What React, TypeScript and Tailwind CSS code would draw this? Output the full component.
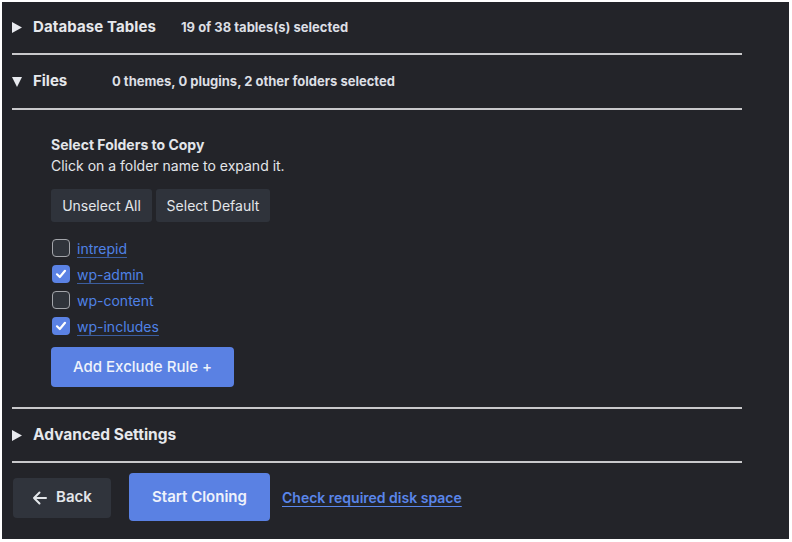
import React from "react";

function TriRight() {
  return (
    <svg width="10" height="11" viewBox="0 0 10 11" className="shrink-0">
      <polygon points="0,0 10,5.5 0,11" fill="#e8eaee" />
    </svg>
  );
}
function TriDown() {
  return (
    <svg width="10" height="10" viewBox="0 0 10 10" className="shrink-0">
      <polygon points="0,0 10,0 5,10" fill="#e8eaee" />
    </svg>
  );
}

function Sep() {
  return <div className="h-[2px] w-[730px] bg-[#c9c9cb]" />;
}

function Check({ checked }: { checked: boolean }) {
  if (checked) {
    return (
      <div className="w-[18px] h-[18px] rounded-[4px] bg-[#5b82e4] flex items-center justify-center">
        <svg width="12" height="12" viewBox="0 0 12 12">
          <path d="M2 6.3 L4.8 9 L10 2.8" stroke="#ffffff" strokeWidth="2.2" fill="none" strokeLinecap="round" strokeLinejoin="round" />
        </svg>
      </div>
    );
  }
  return <div className="w-[18px] h-[18px] rounded-[4px] bg-[#30343b] border-[1.5px] border-[#a3a5aa]" />;
}

export default function App() {
  const folders = [
    { name: "intrepid", checked: false, underline: true },
    { name: "wp-admin", checked: true, underline: true },
    { name: "wp-content", checked: false, underline: false },
    { name: "wp-includes", checked: true, underline: true },
  ];
  return (
    <div className="w-[792px] h-[542px] bg-white pt-[2px] pl-[2px]" style={{ fontFamily: "Inter, 'Noto Sans', sans-serif" }}>
      <div className="w-[787px] h-[537px] bg-[#232429] pl-[10px] text-[#e6e8ec]">
        {/* Database Tables */}
        <div className="h-[51px] flex items-center">
          <TriRight />
          <span className="ml-[11px] w-[148px] text-[15px] font-bold tracking-[0.1px]">Database Tables</span>
          <span className="text-[13px] font-bold text-[#dcdfe4]">19 of 38 tables(s) selected</span>
        </div>
        <Sep />
        {/* Files */}
        <div className="h-[53px] flex items-center">
          <TriDown />
          <span className="ml-[11px] w-[79px] text-[15px] font-bold">Files</span>
          <span className="text-[13px] font-bold text-[#dcdfe4]">0 themes, 0 plugins, 2 other folders selected</span>
        </div>
        <Sep />
        <div className="pl-[39px] pt-[25px] pb-[20px]">
          <div className="text-[14px] font-bold leading-[20px] text-[#e3e6ea]">Select Folders to Copy</div>
          <div className="text-[14px] leading-[21px] text-[#e3e6ea]">Click on a folder name to expand it.</div>
          <div className="flex gap-[4px] mt-[13px]">
            <button className="h-[33px] w-[101px] rounded-[3px] bg-[#2f333b] text-[14px] text-[#e3e6ea]">Unselect All</button>
            <button className="h-[33px] w-[114px] rounded-[3px] bg-[#2f333b] text-[14px] text-[#e3e6ea]">Select Default</button>
          </div>
          <div className="mt-[13px] flex flex-col">
            {folders.map((f) => (
              <div key={f.name} className="h-[26px] flex items-center">
                <div className="ml-[1px]">
                  <Check checked={f.checked} />
                </div>
                <span
                  className={
                    "ml-[7px] text-[14px] text-[#4f82e6] " +
                    (f.underline ? "underline decoration-[#3b5d9e] underline-offset-[3px]" : "")
                  }
                >
                  {f.name}
                </span>
              </div>
            ))}
          </div>
          <button className="mt-[8px] h-[40px] w-[183px] rounded-[4px] bg-[#5a81e3] text-[15px] font-medium text-[#eef2fb]">
            Add Exclude Rule +
          </button>
        </div>
        <Sep />
        {/* Advanced */}
        <div className="h-[52px] flex items-center">
          <TriRight />
          <span className="ml-[11px] text-[15.5px] font-bold">Advanced Settings</span>
        </div>
        <Sep />
        <div className="flex items-center pt-[10px]">
          <button className="ml-[1px] mt-[1px] h-[40px] w-[98px] rounded-[4px] bg-[#30343c] flex items-center justify-center gap-[9px] text-[15px] font-semibold text-[#e3e6ea]">
            <svg width="15" height="14" viewBox="0 0 15 14">
              <path d="M14 7 H2 M7.5 1.5 L2 7 L7.5 12.5" stroke="#e3e6ea" strokeWidth="2" fill="none" strokeLinecap="round" strokeLinejoin="round" />
            </svg>
            Back
          </button>
          <button className="ml-[18px] h-[48px] w-[141px] rounded-[4px] bg-[#5a81e3] text-[15px] font-semibold text-[#eef2fb]">
            Start Cloning
          </button>
          <span className="ml-[12px] mt-[1px] text-[14px] font-semibold text-[#5a86ea] underline underline-offset-[3px]">
            Check required disk space
          </span>
        </div>
      </div>
    </div>
  );
}
